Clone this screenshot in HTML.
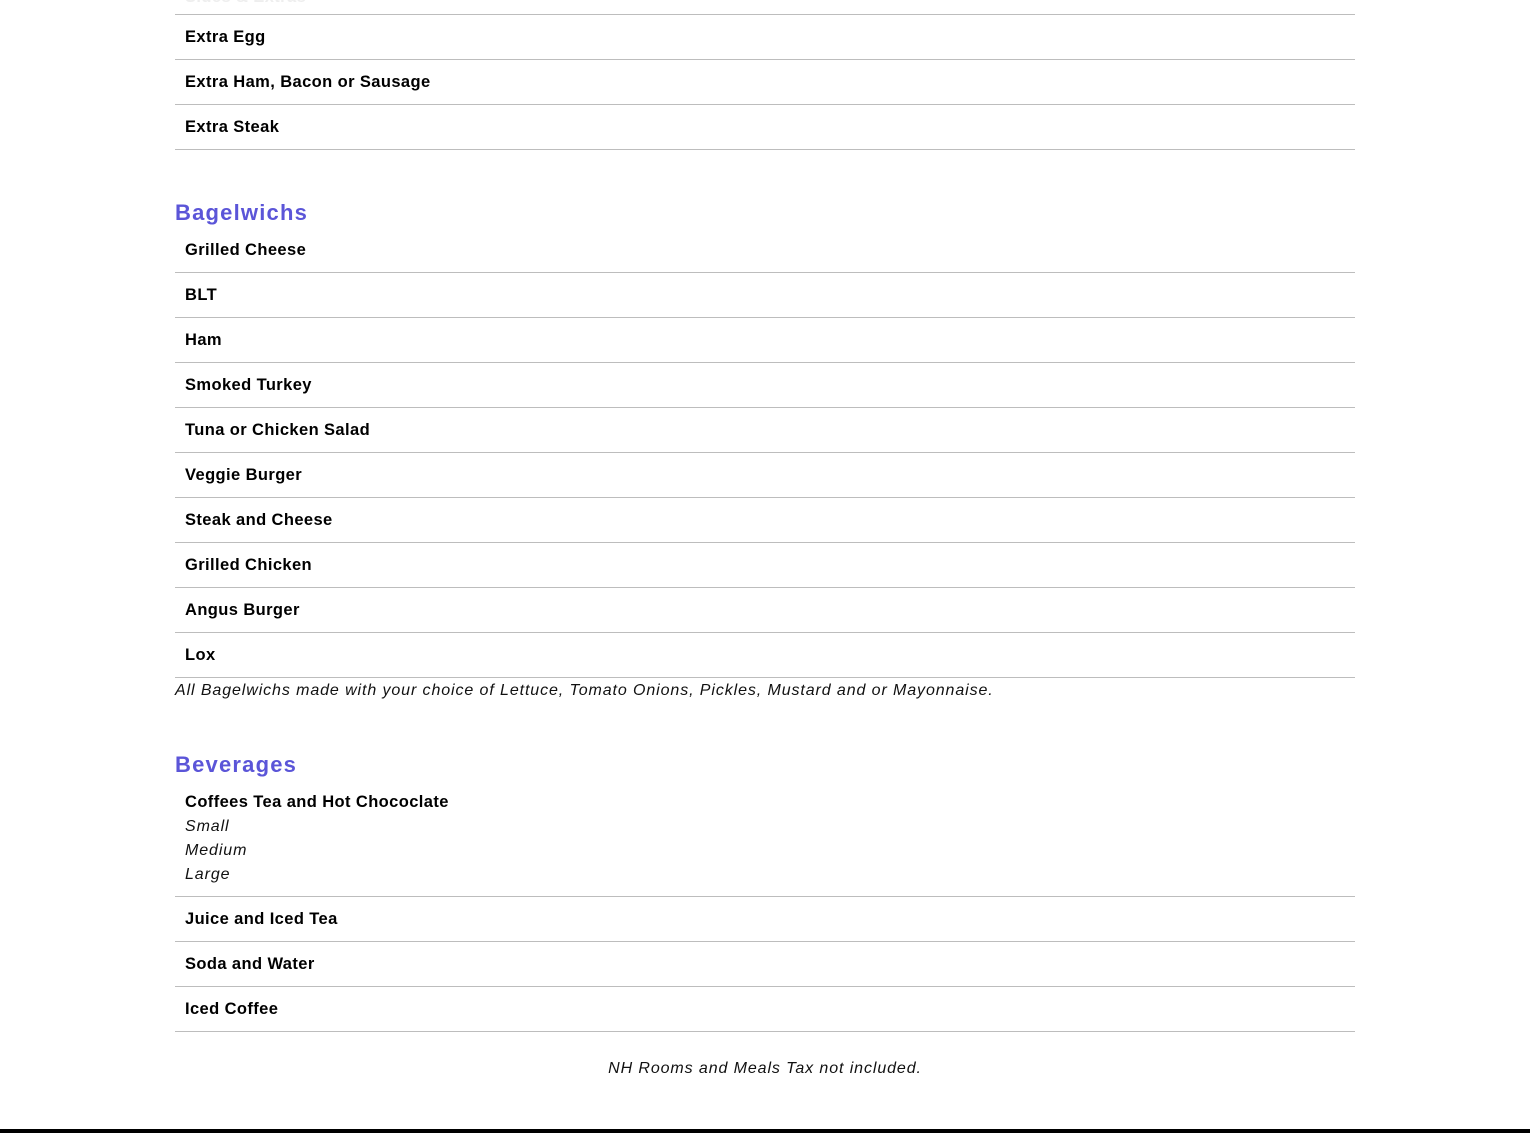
<!DOCTYPE html>
<html><head><style>
body{margin:0;width:1530px;height:1133px;overflow:hidden;background:#fff;position:relative;font-family:"Liberation Sans",sans-serif;}
.t{position:absolute;left:185px;line-height:20px;font-weight:bold;font-size:16.5px;letter-spacing:0.4px;color:#000;white-space:nowrap;margin-top:1px;}
.i{position:absolute;left:185px;line-height:20px;font-style:italic;font-size:16px;letter-spacing:0.9px;color:#111;white-space:nowrap;margin-top:2px;}
.l{position:absolute;left:175px;width:1180px;height:1px;background:#bdbdbd;}
.h{position:absolute;left:175px;line-height:28px;font-weight:bold;font-size:22px;letter-spacing:1.2px;color:#5b55d8;margin-top:1px;}
</style></head><body>
<div class="t" style="top:-14px;color:#eee">Sides & Extras</div>
<div class="l" style="top:14px"></div>
<div class="t" style="top:26px">Extra Egg</div>
<div class="l" style="top:59px"></div>
<div class="t" style="top:71px">Extra Ham, Bacon or Sausage</div>
<div class="l" style="top:104px"></div>
<div class="t" style="top:116px">Extra Steak</div>
<div class="l" style="top:149px"></div>

<div class="h" style="top:198px">Bagelwichs</div>
<div class="t" style="top:239px">Grilled Cheese</div>
<div class="l" style="top:272px"></div>
<div class="t" style="top:284px">BLT</div>
<div class="l" style="top:317px"></div>
<div class="t" style="top:329px">Ham</div>
<div class="l" style="top:362px"></div>
<div class="t" style="top:374px">Smoked Turkey</div>
<div class="l" style="top:407px"></div>
<div class="t" style="top:419px">Tuna or Chicken Salad</div>
<div class="l" style="top:452px"></div>
<div class="t" style="top:464px">Veggie Burger</div>
<div class="l" style="top:497px"></div>
<div class="t" style="top:509px">Steak and Cheese</div>
<div class="l" style="top:542px"></div>
<div class="t" style="top:554px">Grilled Chicken</div>
<div class="l" style="top:587px"></div>
<div class="t" style="top:599px">Angus Burger</div>
<div class="l" style="top:632px"></div>
<div class="t" style="top:644px">Lox</div>
<div class="l" style="top:677px"></div>
<div class="i" style="top:679px;left:175px">All Bagelwichs made with your choice of Lettuce, Tomato Onions, Pickles, Mustard and or Mayonnaise.</div>

<div class="h" style="top:750px">Beverages</div>
<div class="t" style="top:791px">Coffees Tea and Hot Chococlate</div>
<div class="i" style="top:815px">Small</div>
<div class="i" style="top:839px">Medium</div>
<div class="i" style="top:863px">Large</div>
<div class="l" style="top:896px"></div>
<div class="t" style="top:908px">Juice and Iced Tea</div>
<div class="l" style="top:941px"></div>
<div class="t" style="top:953px">Soda and Water</div>
<div class="l" style="top:986px"></div>
<div class="t" style="top:998px">Iced Coffee</div>
<div class="l" style="top:1031px"></div>
<div class="i" style="top:1057px;left:0;width:1530px;text-align:center">NH Rooms and Meals Tax not included.</div>
<div style="position:absolute;left:0;top:1129px;width:1530px;height:4px;background:#000"></div>
</body></html>
